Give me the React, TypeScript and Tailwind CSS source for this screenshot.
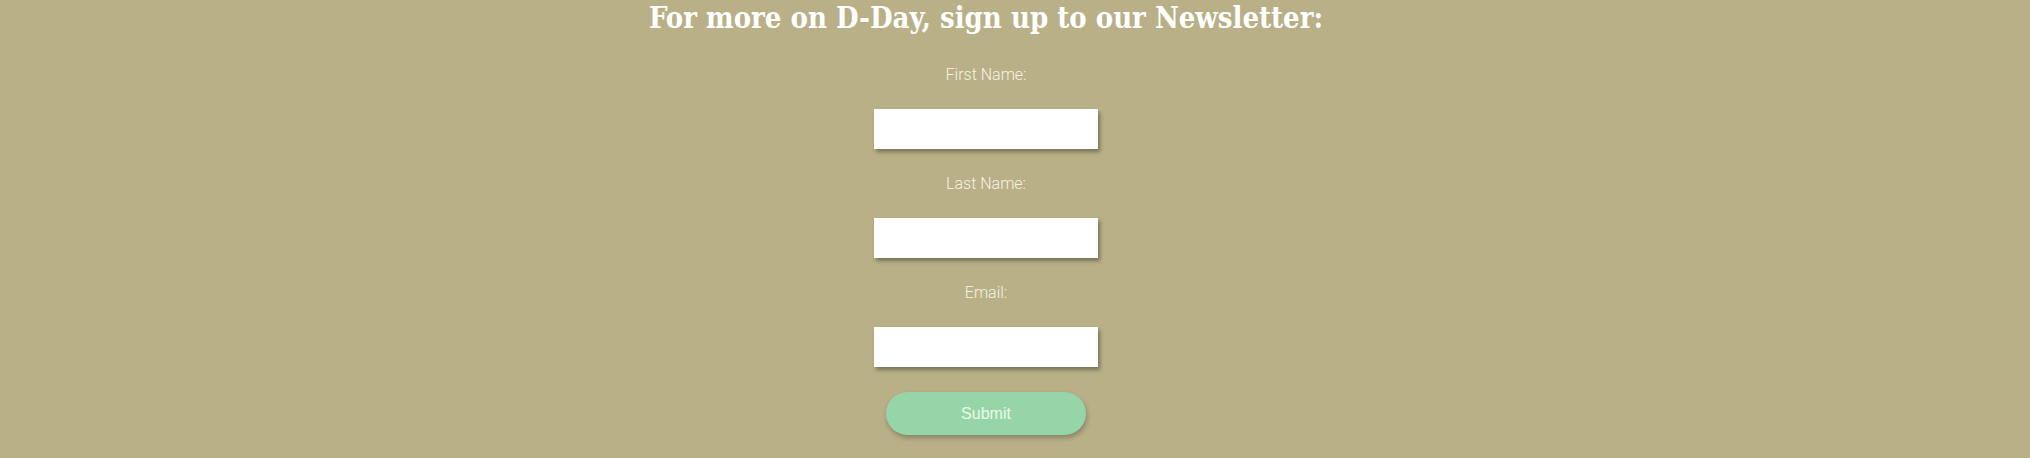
import React from "react";

const fields = [
  { id: "firstName", label: "First Name:", type: "text" },
  { id: "lastName", label: "Last Name:", type: "text" },
  { id: "email", label: "Email:", type: "email" },
];

export default function App() {
  return (
    <div className="min-h-screen w-full bg-[#b9b087] flex flex-col items-center pr-[58px] overflow-hidden">
      <h2 className="text-[29px] leading-[37px] font-bold text-white font-['Roboto_Slab','DejaVu_Serif_Condensed','DejaVu_Serif',serif] whitespace-nowrap">
        For more on D-Day, sign up to our Newsletter:
      </h2>
      <form className="flex flex-col items-center pt-[26px]" onSubmit={(e) => e.preventDefault()}>
        {fields.map((f) => (
          <div key={f.id} className="flex flex-col items-center">
            <label htmlFor={f.id} className="text-[16px] leading-[24px] font-light text-[#f6f3e6] font-['Roboto',sans-serif]">
              {f.label}
            </label>
            <input
              id={f.id}
              type={f.type}
              className="mt-[22px] mb-[23px] w-[224px] h-[40px] bg-white shadow-[2px_3px_4px_rgba(0,0,0,0.35)] outline-none px-2"
            />
          </div>
        ))}
        <button
          type="submit"
          className="mt-[2px] w-[200px] h-[43px] rounded-full bg-[#95d5a8] text-[#eef8ea] text-[16px] font-['Liberation_Sans',Arial,sans-serif] shadow-[1px_3px_5px_rgba(0,0,0,0.25)]"
        >
          Submit
        </button>
      </form>
    </div>
  );
}
